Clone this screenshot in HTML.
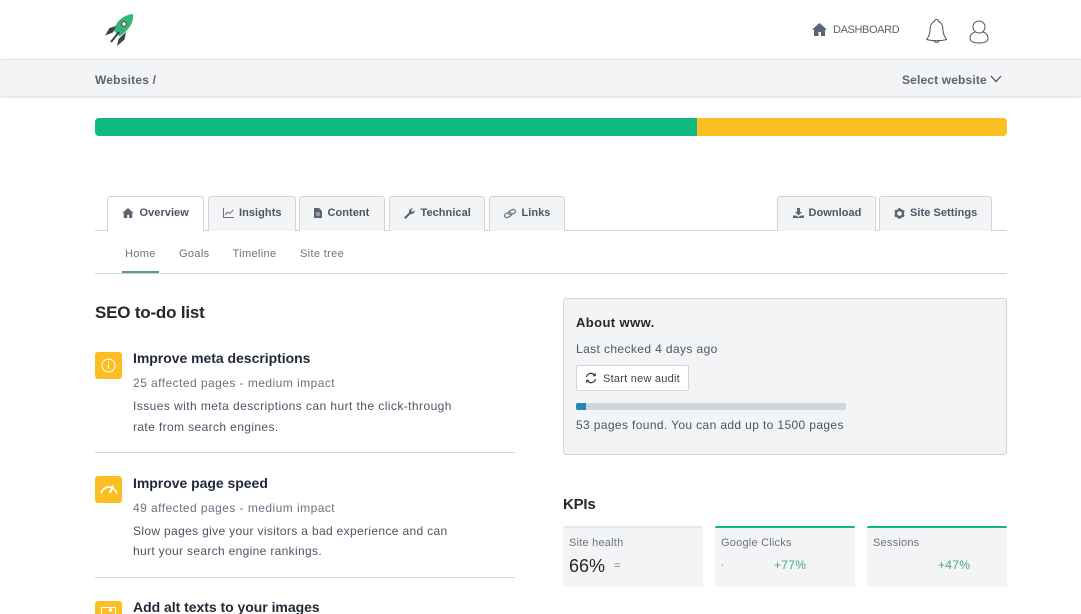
<!DOCTYPE html>
<html><head><meta charset="utf-8">
<style>
html,body{margin:0;padding:0;width:1081px;height:614px;overflow:hidden;background:#fff;font-family:"Liberation Sans",sans-serif;color:#212529}
#w{position:relative;width:1081px;height:614px;overflow:hidden}
.a{position:absolute;white-space:nowrap}
.tab{position:absolute;top:196px;height:34px;background:#f3f4f6;border:1px solid #d1d5db;border-bottom:0;border-radius:3px 3px 0 0;box-sizing:content-box}
.tl{font-size:11px;font-weight:bold;color:#4b5563;top:207px;letter-spacing:.05px}
.sub{font-size:11px;color:#6b7280;top:248px;letter-spacing:.35px}
.h{font-size:14px;font-weight:bold;color:#1f2937;left:133px;letter-spacing:-.03px}
.m{font-size:12px;color:#6b7280;left:133px;letter-spacing:.45px}
.d{font-size:12px;color:#4b5563;left:133px;letter-spacing:.34px}
.ic{position:absolute;left:95px;width:27px;height:27px;background:#fbbf24;border-radius:3px}
.kpi{position:absolute;top:526px;width:140px;height:61px;background:#f3f4f6;border-top:2px solid #10b981;border-radius:2px;box-sizing:border-box}
.kl{font-size:11px;color:#6b7280;top:537px;letter-spacing:.22px}
.g{font-size:12px;color:#48a875;top:558px;letter-spacing:.3px}
svg{position:absolute;display:block}
</style></head><body><div id="w">

<div class="a" style="left:0;top:59px;width:1081px;height:38px;background:#f3f4f6;border-top:1px solid #e5e7eb;border-bottom:1px solid #e5e7eb;box-shadow:0 1px 3px rgba(0,0,0,.08);box-sizing:border-box"></div>

<svg style="left:103px;top:12px" width="32" height="36" viewBox="0 0 32 36">
<path d="M30 2 C21 3 14 8 10.500 18 L16.500 24.500 C25 19 31 11 30 2 Z" fill="#34b679"/>
<circle cx="21" cy="12" r="2.400" fill="#fff" stroke="#3f3f46" stroke-width="1"/>
<path d="M2 23.500 L6.500 16 L13 14 L10 20.500 Z M14 34 L15.500 27 L23 20 L21.500 27.500 Z" fill="#3f3f46"/>
<path d="M8 30 L16 20" stroke="#3f3f46" stroke-width="2"/>
</svg>

<svg style="left:812px;top:23px" width="15" height="13" viewBox="0 0 15 13"><path d="M7.500 0 L15 6.600 L13 6.600 L13 13 L9 13 L9 9 L6.500 9 L6.500 13 L2 13 L2 6.600 L0 6.600 Z" fill="#5b6472"/></svg>
<div class="a" style="left:833px;top:24px;font-size:11px;color:#5b6472;letter-spacing:-.38px">DASHBOARD</div>
<svg style="left:926px;top:18px" width="22" height="26" viewBox="0 0 22 26" fill="none" stroke="#4b5563" stroke-width="1"><path d="M10.500 1.500 C12 1.500 12.500 2.500 12.500 3.500 C16.500 5 17 9 17 12 C17 16 18.500 18 20.500 21.500 C16 23 5 23 .8 21.500 C2.800 18 4 16 4 12 C4 9 4.500 5 8.500 3.500 C8.500 2.500 9 1.500 10.500 1.500 Z"/><path d="M8 23 C8.500 24.800 12.500 24.800 13 23"/></svg>
<svg style="left:968px;top:20px" width="22" height="24" viewBox="0 0 22 24" fill="none" stroke="#4b5563" stroke-width="1"><circle cx="11" cy="7" r="6"/><path d="M7 12 C4 13 2 15 2 18 C2 21 5 23 11 23 C17 23 20 21 20 18 C20 15 18 13 15 12"/></svg>

<div class="a" style="left:95px;top:73px;font-size:12px;font-weight:bold;color:#5b6472;letter-spacing:.2px">Websites /</div>
<div class="a" style="left:902px;top:73px;font-size:12px;font-weight:bold;color:#5b6472;letter-spacing:.15px">Select website</div>
<svg style="left:990px;top:75px" width="12" height="8" viewBox="0 0 12 8" fill="none" stroke="#4b5563" stroke-width="1.300"><path d="M1 1 L6 6.500 L11 1"/></svg>

<div class="a" style="left:95px;top:118px;width:912px;height:18px;background:#fbbf24;border-radius:4px;overflow:hidden"><div style="width:602px;height:18px;background:#10b981"></div></div>

<div class="a" style="left:95px;top:230px;width:912px;height:1px;background:#d1d5db"></div>
<div class="tab" style="left:107px;width:95px;height:35px;background:#fff;z-index:2"></div>
<div class="tab" style="left:208px;width:86px"></div>
<div class="tab" style="left:299px;width:84px"></div>
<div class="tab" style="left:389px;width:94px"></div>
<div class="tab" style="left:489px;width:74px"></div>
<div class="tab" style="left:777px;width:97px"></div>
<div class="tab" style="left:879px;width:111px"></div>

<svg style="z-index:3;left:122px;top:208px" width="12" height="10" viewBox="0 0 15 13"><path d="M7.500 0 L15 6.600 L13 6.600 L13 13 L9 13 L9 9 L6.500 9 L6.500 13 L2 13 L2 6.600 L0 6.600 Z" fill="#5b6472"/></svg>
<div class="a tl" style="z-index:3;left:139.500px">Overview</div>
<svg style="left:223px;top:207.500px" width="11" height="10" viewBox="0 0 11 10" fill="none" stroke="#6b7280"><path d="M.5 0 V9.500 H11" /><path d="M2 7 L4.500 4 L6.500 5.500 L10.500 2"/></svg>
<div class="a tl" style="left:239px">Insights</div>
<svg style="left:314px;top:208px" width="8" height="10" viewBox="0 0 8 10"><path d="M0 0 H5 L8 3 V10 H0 Z" fill="#5b6472"/><path d="M2 5 H6 M2 7 H6" stroke="#f3f4f6" stroke-width=".8"/></svg>
<div class="a tl" style="left:327.500px">Content</div>
<svg style="left:404px;top:207.500px" width="11" height="11" viewBox="0 0 11 11"><path d="M0 9.500 L5 4.500 C4.500 2 6.500 0 9 .5 L7 2.500 L8.500 4 L10.700 2 C11 4.500 9 6.500 6.500 6 L1.500 11 Z" fill="#5b6472"/></svg>
<div class="a tl" style="left:420.500px">Technical</div>
<svg style="left:504px;top:207.500px" width="12" height="11" viewBox="0 0 12 11" fill="none" stroke="#6b7280" stroke-width="1.200"><rect x=".5" y="5" width="7" height="4" rx="2" transform="rotate(-25 4 7)"/><rect x="4.500" y="2" width="7" height="4" rx="2" transform="rotate(-25 8 4)"/></svg>
<div class="a tl" style="left:521.500px">Links</div>
<svg style="left:793px;top:208px" width="11" height="10" viewBox="0 0 11 10"><path d="M4 0 H7 V4 H9 L5.500 7.500 L2 4 H4 Z M0 7.500 H3 L5.500 9 L8 7.500 H11 V10 H0 Z" fill="#5b6472"/></svg>
<div class="a tl" style="left:808.500px">Download</div>
<svg style="left:894px;top:207.500px" width="11" height="11" viewBox="0 0 11 11"><circle cx="5.500" cy="5.500" r="3.500" fill="none" stroke="#5b6472" stroke-width="2.400"/><path d="M5.500 0 V2 M5.500 9 V11 M.7 2.700 L2.500 3.700 M8.500 7.300 L10.300 8.300 M.7 8.300 L2.500 7.300 M8.500 3.700 L10.300 2.700" stroke="#5b6472" stroke-width="1.800"/></svg>
<div class="a tl" style="left:910px">Site Settings</div>

<div class="a sub" style="left:125px">Home</div>
<div class="a sub" style="left:179px">Goals</div>
<div class="a sub" style="left:232.500px">Timeline</div>
<div class="a sub" style="left:300px">Site tree</div>
<div class="a" style="left:122px;top:271px;width:37px;height:2px;background:#48a875"></div>
<div class="a" style="left:95px;top:273px;width:912px;height:1px;background:#d1d5db"></div>

<div class="a" style="left:95px;top:303px;font-size:17px;font-weight:bold;color:#27272a;letter-spacing:-.2px">SEO to-do list</div>

<div class="ic" style="top:352px"></div>
<svg style="left:101px;top:358px" width="15" height="15" viewBox="0 0 15 15" fill="none" stroke="#fff"><circle cx="7.500" cy="7.500" r="6.500"/><path d="M7.500 6.500 V11 M7.500 4 V5.200"/></svg>
<div class="a h" style="top:350px">Improve meta descriptions</div>
<div class="a m" style="top:376px">25 affected pages - medium impact</div>
<div class="a d" style="top:399px;letter-spacing:.43px">Issues with meta descriptions can hurt the click-through</div>
<div class="a d" style="top:420px;letter-spacing:.38px">rate from search engines.</div>
<div class="a" style="left:95px;top:452px;width:420px;height:1px;background:#d1d5db"></div>

<div class="ic" style="top:476px"></div>
<svg style="left:100px;top:484px" width="18" height="12" viewBox="0 0 18 12" fill="none" stroke="#fff" stroke-width="1.600"><path d="M1 9.500 C2 5 6 3 9 3 C12 3 15 5 17 9.500"/><path d="M13 1.500 L10 9" stroke-width="2"/></svg>
<div class="a h" style="top:475px">Improve page speed</div>
<div class="a m" style="top:501px">49 affected pages - medium impact</div>
<div class="a d" style="top:524px;letter-spacing:.34px">Slow pages give your visitors a bad experience and can</div>
<div class="a d" style="top:544px;letter-spacing:.33px">hurt your search engine rankings.</div>
<div class="a" style="left:95px;top:577px;width:420px;height:1px;background:#d1d5db"></div>

<div class="ic" style="top:601px"></div>
<svg style="left:101px;top:607px" width="15" height="7" viewBox="0 0 15 7" fill="none" stroke="#fff"><rect x=".5" y=".5" width="14" height="12"/><circle cx="9.500" cy="3" r="1.200" fill="#fff"/></svg>
<div class="a h" style="top:599px">Add alt texts to your images</div>

<div class="a" style="left:563px;top:298px;width:444px;height:157px;background:#f3f4f6;border:1px solid #d1d5db;border-radius:3px;box-sizing:border-box"></div>
<div class="a" style="left:576px;top:315px;font-size:13px;font-weight:bold;color:#27272a;letter-spacing:.4px">About www.</div>
<div class="a" style="left:576px;top:342px;font-size:12px;color:#4b5563;letter-spacing:.39px">Last checked 4 days ago</div>
<div class="a" style="left:576px;top:365px;width:113px;height:26px;background:#fff;border:1px solid #d1d5db;border-radius:2px;box-sizing:border-box"></div>
<svg style="left:585px;top:372px" width="12" height="12" viewBox="0 0 12 12" fill="none" stroke="#3f3f46" stroke-width="1.300"><path d="M1.500 5 C2 2.500 4 1.300 6 1.300 C7.800 1.300 9 2.300 10 3.500"/><path d="M10.500 7 C10 9.500 8 10.700 6 10.700 C4.200 10.700 3 9.700 2 8.500"/><path d="M10.800 .8 V4.300 H7.500 Z M1.200 11.200 V7.700 H4.500 Z" fill="#3f3f46" stroke="none"/></svg>
<div class="a" style="left:603px;top:373px;font-size:11px;color:#3f3f46;letter-spacing:.24px">Start new audit</div>
<div class="a" style="left:576px;top:403px;width:270px;height:7px;background:#d1d5db;border-radius:2px;overflow:hidden"><div style="width:10px;height:7px;background:#1f8ab5"></div></div>
<div class="a" style="left:576px;top:418px;font-size:12px;color:#4b5563;letter-spacing:.37px">53 pages found. You can add up to 1500 pages</div>

<div class="a" style="left:563px;top:496px;font-size:15px;font-weight:bold;color:#27272a;letter-spacing:-.2px">KPIs</div>
<div class="kpi" style="left:563px;border-top-color:#e5e7eb"></div>
<div class="kpi" style="left:715px"></div>
<div class="kpi" style="left:867px"></div>
<div class="a kl" style="left:569px">Site health</div>
<div class="a kl" style="left:721px">Google Clicks</div>
<div class="a kl" style="left:873px">Sessions</div>
<div class="a" style="left:569px;top:556px;font-size:18px;color:#27272a;letter-spacing:0">66%</div>
<div class="a" style="left:614px;top:560px;font-size:11px;color:#6b7280">=</div>
<div class="a" style="left:721px;top:557px;font-size:9px;color:#b08d6a">,</div>
<div class="a g" style="left:774px">+77%</div>
<div class="a g" style="left:938px">+47%</div>
</div></body></html>
